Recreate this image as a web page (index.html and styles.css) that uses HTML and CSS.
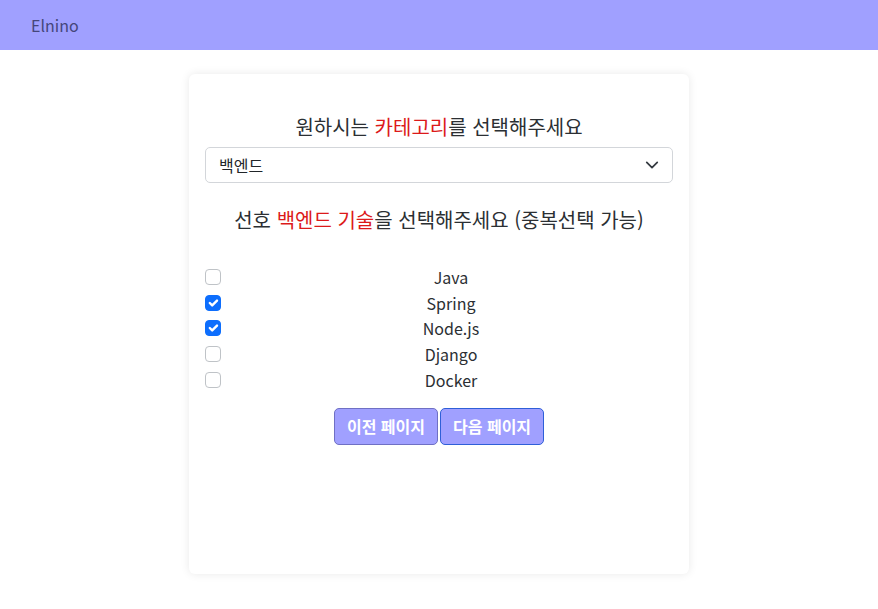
FILE: index.html
```html
<!DOCTYPE html>
<html lang="ko">
<head>
<meta charset="utf-8">
<title>Elnino</title>
<link rel="stylesheet" href="styles.css">
</head>
<body>
<nav class="navbar"><span class="brand">Elnino</span></nav>
<main class="page">
  <section class="card">
    <h2 class="title">원하시는 <span class="hl">카테고리</span>를 선택해주세요</h2>
    <div class="select">
      <span>백엔드</span>
      <svg class="chev" width="16" height="16" viewBox="0 0 16 16"><path d="M2 5l6 6 6-6" fill="none" stroke="#343a40" stroke-width="2" stroke-linecap="round" stroke-linejoin="round"/></svg>
    </div>
    <h2 class="title title2">선호 <span class="hl">백엔드 기술</span>을 선택해주세요 (중복선택 가능)</h2>
    <ul class="list">
      <li class="row"><span class="cb"></span><span class="label">Java</span></li>
      <li class="row"><span class="cb on"><svg width="16" height="16" viewBox="0 0 20 20"><path d="M6 10l3 3 6-6" fill="none" stroke="#fff" stroke-width="3" stroke-linecap="round" stroke-linejoin="round"/></svg></span><span class="label">Spring</span></li>
      <li class="row"><span class="cb on"><svg width="16" height="16" viewBox="0 0 20 20"><path d="M6 10l3 3 6-6" fill="none" stroke="#fff" stroke-width="3" stroke-linecap="round" stroke-linejoin="round"/></svg></span><span class="label">Node.js</span></li>
      <li class="row"><span class="cb"></span><span class="label">Django</span></li>
      <li class="row"><span class="cb"></span><span class="label">Docker</span></li>
    </ul>
    <div class="buttons">
      <button class="btn">이전 페이지</button><button class="btn focus">다음 페이지</button>
    </div>
  </section>
</main>
</body>
</html>
```
FILE: styles.css
```css
* { box-sizing: border-box; }
html, body { margin: 0; padding: 0; }
body {
  font-family: "Noto Sans CJK KR", "Noto Sans", sans-serif;
  color: #212529;
  background: #fff;
}
.navbar {
  height: 50px;
  background: #a0a0ff;
  display: flex;
  align-items: center;
  padding-left: 31px;
}
.brand {
  font-size: 16px;
  color: #45467a;
}
.page {
  display: flex;
  justify-content: center;
  padding: 24px 0 30px;
}
.card {
  width: 500px;
  height: 500px;
  background: #fff;
  border-radius: 6px;
  box-shadow: 0 0 10px rgba(0,0,0,0.09);
  padding: 38px 16px 16px;
  display: flex;
  flex-direction: column;
}
.title {
  margin: 0;
  font-size: 20px;
  font-weight: 400;
  line-height: 30px;
  text-align: center;
  color: #2b2f33;
}
.hl { color: #dc1a1a; }
.select {
  margin-top: 5px;
  height: 36px;
  border: 1px solid #d3d6da;
  border-radius: 5px;
  display: flex;
  align-items: center;
  justify-content: space-between;
  padding: 0 13px 0 13px;
  font-size: 16px;
  color: #212529;
}
.chev { width: 14px; height: 14px; }
.title2 { margin-top: 22px; }
.list {
  list-style: none;
  margin: 29px 0 0;
  padding: 0;
}
.row {
  display: flex;
  align-items: center;
  height: 25.75px;
}
.cb {
  width: 16px;
  height: 16px;
  border: 1px solid #bfc3c7;
  border-radius: 4px;
  flex: none;
  display: flex;
  align-items: center;
  justify-content: center;
}
.cb.on {
  background: #0d6efd;
  border-color: #0d6efd;
}
.cb.on svg { flex: none; }
.label {
  flex: 1;
  margin-left: 8px;
  text-align: center;
  font-size: 16px;
  color: #2b2f33;
}
.buttons {
  margin-top: 15px;
  display: flex;
  justify-content: center;
  gap: 2px;
}
.btn {
  font-family: inherit;
  font-size: 16px;
  font-weight: 700;
  color: #fff;
  background: #a0a0ff;
  border: 1px solid #6f70c4;
  border-radius: 5px;
  height: 37px;
  padding: 0 12px;
}
.btn.focus { border-color: #2f5fd8; }
```
